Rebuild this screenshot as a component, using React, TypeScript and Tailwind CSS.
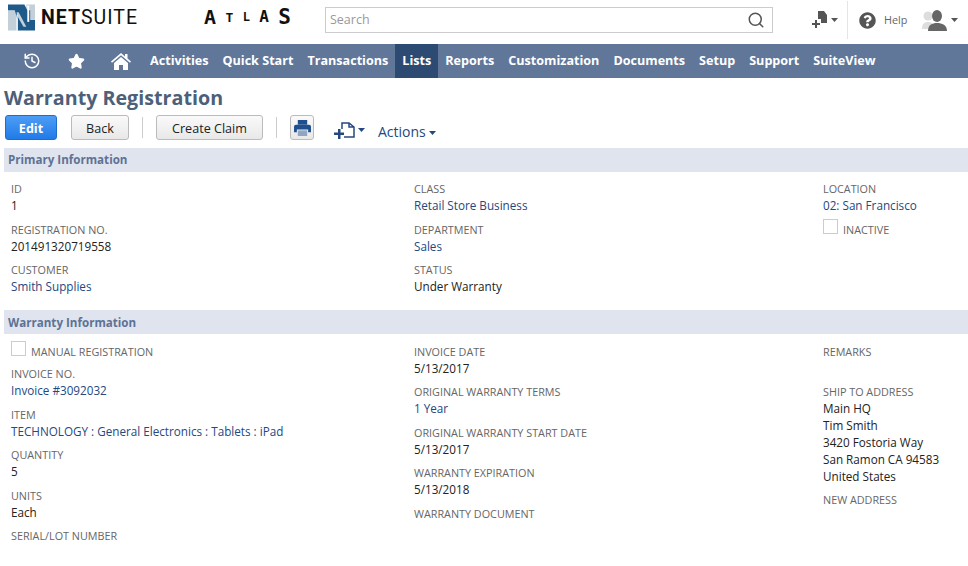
import React from 'react'
import { Search, Star, History } from 'lucide-react'
import { FaQuestionCircle } from 'react-icons/fa'

const navItems = ['Activities', 'Quick Start', 'Transactions', 'Lists', 'Reports', 'Customization', 'Documents', 'Setup', 'Support', 'SuiteView']

const Caret = ({ className = '' }: { className?: string }) => (
  <svg width="7" height="4" viewBox="0 0 7 4" className={className}>
    <path d="M0 0h7L3.5 4z" fill="currentColor" />
  </svg>
)

const Field = ({ label, value, link, className = '' }: { label: string; value?: string; link?: boolean; className?: string }) => (
  <div className={`mb-[6.4px] ${className}`}>
    <div className="h-[17px] text-[10.8px] leading-[17px] text-[#666] uppercase">{label}</div>
    {value && <div className={`h-[17px] text-[11.7px] leading-[17px] ${link ? 'text-[#24487f]' : 'text-[#222]'}`}>{value}</div>}
  </div>
)

const Check = ({ label }: { label: string }) => (
  <div className="flex items-end h-4 mb-[6.5px]">
    <span className="w-[15px] h-[15px] border border-[#ccc] bg-white mr-[5px] mb-[3px] shrink-0" />
    <span className="text-[10.8px] leading-[15px] text-[#666] uppercase">{label}</span>
  </div>
)

const Section = ({ title, lineClass }: { title: string; lineClass: string }) => (
  <div className={`ml-1 h-6 bg-[#e0e4ee] pl-1 text-[11.6px] font-bold text-[#5d7295] ${lineClass}`}>{title}</div>
)

const Logo = () => (
  <svg width="28" height="27" viewBox="0 0 28 27">
    <rect x="0" y="6" width="9" height="21" fill="#c3d0da" />
    <rect x="19" y="0" width="9" height="16" fill="#c3d0da" />
    <path d="M0 0h17l3 6 3 0v10h5v11H10V16L7 6H0z" fill="#1d5a8a" />
    <path d="M20 1h2v17h-2z" fill="#fff" />
    <path d="M9 8h2l8 15h-3L9 11z" fill="#c3d0da" />
    <path d="M9 11h1v16H9z" fill="#fff" />
  </svg>
)

export default function App() {
  return (
    <div className="w-[968px] h-[566px] overflow-hidden bg-white font-['Open_Sans',sans-serif]">
      {/* Top header */}
      <div className="h-11 flex items-center">
        <div className="ml-2 flex items-center -mt-[9px] w-[130px]">
          <Logo />
          <div className="ml-1.5 font-['Roboto',sans-serif] text-[19.5px] tracking-[1px] text-[#111] whitespace-nowrap">
            <span className="font-bold">NET</span>SUITE
          </div>
        </div>
        <div className="ml-[66px] w-[87px] -mt-[10px] h-5 font-['DejaVu_Sans_Mono',monospace] font-bold text-[#111] flex items-center justify-between leading-none">
          <span className="text-[20px]">A</span>
          <span className="text-[13px]">T</span>
          <span className="text-[12px]">L</span>
          <span className="text-[16px]">A</span>
          <span className="text-[21px]">S</span>
        </div>
        <div className="ml-[34px] w-[448px] h-[26px] -mt-1 border border-[#ccc] flex items-center justify-between pl-1 pr-[7px]">
          <span className="text-[12.5px] text-[#999]">Search</span>
          <Search className="w-[18px] h-[18px] text-[#555]" strokeWidth={2} />
        </div>
        <div className="ml-[39px] w-[36px] h-[38px] -mt-1 flex items-center border-r border-[#e5e5e5]">
          <svg width="17" height="18" viewBox="0 0 17 18" className="text-[#555]">
            <path d="M6 0h6l3 4v8H9V8H6z" fill="currentColor" />
            <path d="M3 9h2v3h3v2H5v3H3v-3H0v-2h3z" fill="currentColor" />
          </svg>
          <Caret className="ml-0.5 text-[#555]" />
        </div>
        <FaQuestionCircle className="ml-[11px] -mt-1 w-[17px] h-[17px] text-[#555]" />
        <span className="ml-2 -mt-1 text-[10.8px] text-[#666]">Help</span>
        <svg width="25" height="21" viewBox="0 0 25 21" className="ml-[15px] -mt-1">
          <circle cx="6" cy="6" r="4.5" fill="#ddd" />
          <path d="M0 19c0-5 2-7 6-7s6 2 6 7z" fill="#ddd" />
          <ellipse cx="15" cy="6" rx="5" ry="6" fill="#666" />
          <path d="M6 21c0-6 4-8 9-8s10 2 10 8z" fill="#666" />
        </svg>
        <Caret className="ml-1 -mt-1 text-[#555]" />
      </div>

      {/* Nav bar */}
      <div className="h-[34px] bg-[#607799] flex items-center text-white">
        <History className="ml-[23px] w-[18px] h-[18px]" strokeWidth={2} />
        <Star className="ml-[27px] w-[17px] h-[17px]" fill="currentColor" />
        <svg width="20" height="17" viewBox="0 0 20 17" className="ml-[26px]">
          <path d="M0 8.5 10 0l4 3.5V1h2.5v4.6L20 8.5l-1 1.2L10 2.3 1 9.7z" fill="currentColor" />
          <path d="M3 10 10 4l7 6v7h-5v-5H8v5H3z" fill="currentColor" />
        </svg>
        <div className="ml-[12px] flex items-center h-full">
          {navItems.map((item) => (
            <div
              key={item}
              className={`h-full px-[7px] flex items-center text-[12.6px] font-bold ${item === 'Lists' ? 'bg-[#2d4a72]' : ''}`}
            >
              {item}
            </div>
          ))}
        </div>
      </div>

      {/* Title */}
      <h1 className="ml-1 mt-[7px] h-[26px] text-[19.7px] leading-[26px] font-bold text-[#4d5f79]">Warranty Registration</h1>

      {/* Toolbar */}
      <div className="ml-[5px] mt-1 h-[29px] flex items-start">
        <button className="w-[52px] h-[25px] rounded-[3px] border border-[#1f6fc9] bg-gradient-to-b from-[#4c9df5] to-[#1f7ae8] text-[12.6px] leading-[25px] font-bold text-white">Edit</button>
        <button className="ml-[14px] w-[58px] h-[25px] rounded-[3px] border border-[#bbb] bg-gradient-to-b from-[#fafafa] to-[#e8e8e8] text-[12.6px] leading-[25px] text-[#222]">Back</button>
        <div className="ml-[13px] mt-0.5 h-[21px] w-px bg-[#ccc]" />
        <button className="ml-[13px] w-[107px] h-[25px] rounded-[3px] border border-[#bbb] bg-gradient-to-b from-[#fafafa] to-[#e8e8e8] text-[12.6px] leading-[25px] text-[#222]">Create Claim</button>
        <div className="ml-[13px] mt-0.5 h-[21px] w-px bg-[#ccc]" />
        <button className="ml-[13px] w-6 h-[25px] rounded-[3px] border border-[#bbb] bg-gradient-to-b from-[#fafafa] to-[#e8e8e8] flex items-center justify-center">
          <svg width="17" height="16" viewBox="0 0 18 17" className="text-[#1f4f8f]">
            <path d="M4 0h10v5H4z" fill="currentColor" />
            <path d="M2 5h14a2 2 0 0 1 2 2v6h-3v-3H3v3H0V7a2 2 0 0 1 2-2z" fill="currentColor" />
            <path d="M4 11h10v6H4z" fill="currentColor" opacity="0.45" />
          </svg>
        </button>
        <svg width="22" height="17" viewBox="0 0 22 17" className="ml-5 mt-[7px] text-[#24487f]">
          <path d="M8 7V1h7l5 4v10H10M15 1v4h5" fill="none" stroke="currentColor" strokeWidth="1.5" />
          <path d="M4 7h2.5v3.5H10V13H6.5v4H4v-4H0v-2.5h4z" fill="currentColor" />
        </svg>
        <Caret className="ml-[2px] mt-[13px] text-[#24487f]" />
        <span className="ml-[13px] mt-[7px] text-[14px] leading-5 text-[#24487f]">Actions</span>
        <Caret className="ml-[3px] mt-[16px] text-[#24487f]" />
      </div>

      {/* Primary Information */}
      <div className="mt-[4px]"><Section title="Primary Information" lineClass="leading-[23px]" /></div>
      <div className="mt-[8.3px] h-[129.7px] grid grid-cols-[403px_409px_1fr] pl-[11px]">
        <div>
          <Field label="ID" value="1" />
          <Field label="Registration No." value="201491320719558" />
          <Field label="Customer" value="Smith Supplies" link />
        </div>
        <div>
          <Field label="Class" value="Retail Store Business" link />
          <Field label="Department" value="Sales" link />
          <Field label="Status" value="Under Warranty" />
        </div>
        <div>
          <Field label="Location" value="02: San Francisco" link />
          <Check label="Inactive" />
        </div>
      </div>

      {/* Warranty Information */}
      <Section title="Warranty Information" lineClass="leading-[25px]" />
      <div className="mt-[9px] grid grid-cols-[403px_409px_1fr] pl-[11px]">
        <div>
          <Check label="Manual Registration" />
          <Field label="Invoice No." value="Invoice #3092032" link />
          <Field label="Item" value="TECHNOLOGY : General Electronics : Tablets : iPad" link />
          <Field label="Quantity" value="5" />
          <Field label="Units" value="Each" />
          <Field label="Serial/Lot Number" />
        </div>
        <div>
          <Field label="Invoice Date" value="5/13/2017" />
          <Field label="Original Warranty Terms" value="1 Year" link />
          <Field label="Original Warranty Start Date" value="5/13/2017" />
          <Field label="Warranty Expiration" value="5/13/2018" />
          <Field label="Warranty Document" />
        </div>
        <div>
          <div className="h-10 text-[10.8px] leading-[17px] text-[#666] uppercase">Remarks</div>
          <div className="text-[10.8px] leading-[17px] text-[#666] uppercase">Ship To Address</div>
          <div className="text-[11.7px] leading-[17px] text-[#222]">
            <div>Main HQ</div>
            <div>Tim Smith</div>
            <div>3420 Fostoria Way</div>
            <div>San Ramon CA 94583</div>
            <div>United States</div>
          </div>
          <div className="mt-1.5 text-[10.8px] leading-[17px] text-[#666] uppercase">New Address</div>
        </div>
      </div>
    </div>
  )
}
